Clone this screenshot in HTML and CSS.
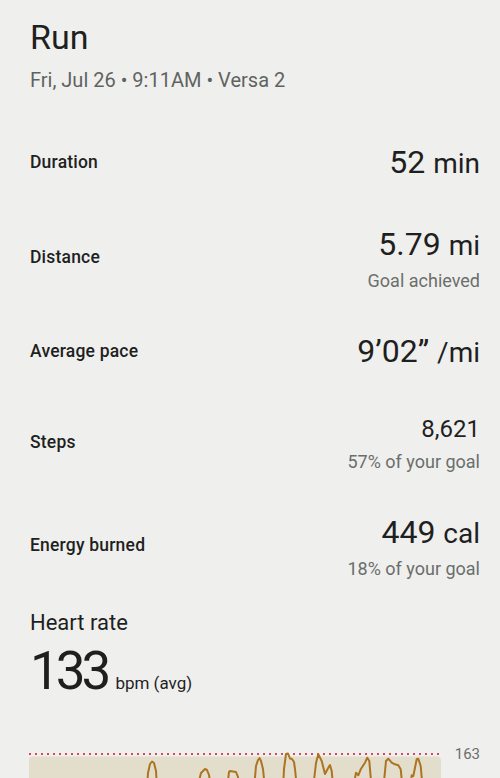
FILE: index.html
```html
<!DOCTYPE html>
<html lang="en">
<head>
  <meta charset="UTF-8" />
  <title>Run</title>
  <link rel="stylesheet" href="styles.css">
</head>
<body>
  <main class="page">
    <h1 class="title">Run</h1>
    <p class="meta">Fri, Jul 26 • 9:11AM • Versa 2</p>

    <section class="stats">
      <div class="row">
        <span class="label">Duration</span>
        <div class="value-block">
          <div class="value">52 <span class="unit">min</span></div>
        </div>
      </div>
      <div class="row">
        <span class="label">Distance</span>
        <div class="value-block">
          <div class="value">5.79 <span class="unit">mi</span></div>
          <div class="note">Goal achieved</div>
        </div>
      </div>
      <div class="row">
        <span class="label">Average pace</span>
        <div class="value-block">
          <div class="value">9’02” <span class="unit">/mi</span></div>
        </div>
      </div>
      <div class="row">
        <span class="label">Steps</span>
        <div class="value-block">
          <div class="value small">8,621</div>
          <div class="note">57% of your goal</div>
        </div>
      </div>
      <div class="row">
        <span class="label">Energy burned</span>
        <div class="value-block">
          <div class="value">449 <span class="unit">cal</span></div>
          <div class="note">18% of your goal</div>
        </div>
      </div>
    </section>

    <section class="heart">
      <h2 class="heart-title">Heart rate</h2>
      <div class="heart-avg">
        <span class="big">133</span><span class="bpm">bpm (avg)</span>
      </div>

      <div class="chart">
        <svg class="chart-svg" width="412" height="40" viewBox="0 0 412 40">
          <rect x="0" y="7.5" width="412" height="60" rx="4" fill="#e3ddcc" />
          <line x1="0" y1="5" x2="412" y2="5" stroke="#d8495e" stroke-width="2" stroke-dasharray="2 4" />
          <g fill="none" stroke="#ad7420" stroke-width="2" stroke-linejoin="round" stroke-linecap="round">
            <path d="M118 40 L119 24 L121 15 L123 12.5 L125 14 L127 22 L128 40" />
            <path d="M169 40 L170 32 L172 24 L174 22 L176 20 L178 21 L180 26 L181 32 L182 40" />
            <path d="M198 40 L200 23 L201 22 L207 23 L209 28 L211 40" />
            <path d="M225 40 L227 17 L229 11 L230.5 9 L232 12 L234 20 L236 40" />
            <path d="M254 40 L255 20 L257 5 L259 4.5 L261 9.5 L263 10 L265 13 L266 20 L268 40" />
            <path d="M284 40 L287 14 L289.3 5.3 L292.7 12 L296 25 L299.3 18.7 L301 16 L302.7 22 L304.3 40" />
            <path d="M324 40 L327 23.7 L329.3 26.3 L331.7 20.3 L336 13.7 L338.3 8.7 L340.3 12 L342.7 40" />
            <path d="M354.3 40 L357 12 L359.3 9.7 L362.7 13.7 L366 15.3 L369.3 16.3 L371.7 20.3 L373.7 40" />
            <path d="M381 40 L382.7 26.3 L384.3 27 L387.7 10.3 L389.3 9.7 L391.7 17 L393.7 40" />
          </g>
        </svg>
        <span class="chart-max">163</span>
      </div>
    </section>
  </main>
</body>
</html>
```

FILE: styles.css
```css
body {
  margin: 0;
  background: #eff0ee;
  font-family: Roboto, "Noto Sans", sans-serif;
  color: #1f1f1f;
}

.page {
  padding: 17px 20px 0 30px;
}

.title {
  margin: 0;
  font-size: 34px;
  font-weight: 400;
  line-height: 40px;
}

.meta {
  margin: 11px 0 0;
  font-size: 20px;
  line-height: 24px;
  color: #5f6360;
}

.stats {
  margin-top: 29px;
}

.row {
  display: flex;
  justify-content: space-between;
  align-items: center;
  padding: 21px 0;
}

.label {
  font-size: 17.5px;
  font-weight: 500;
  letter-spacing: 0.2px;
}

.value-block {
  text-align: right;
}

.value {
  font-size: 32px;
  line-height: 40px;
}

.value.small {
  font-size: 24px;
  line-height: 32px;
}

.unit {
  font-size: 28px;
  line-height: 1;
}

.note {
  margin: 7px 0 -2px;
  font-size: 18px;
  line-height: 20px;
  color: #6b6e6b;
}

.heart-title {
  margin: 11px 0 0;
  font-size: 22px;
  font-weight: 400;
  line-height: 28px;
}

.heart-avg {
  margin-top: 2px;
  line-height: 64px;
}

.big {
  font-size: 53px;
  letter-spacing: -4px;
}

.bpm {
  margin-left: 8px;
  font-size: 17px;
  line-height: 1;
}

.chart {
  display: flex;
  align-items: flex-start;
  margin-top: 33px;
}

.chart-svg {
  display: block;
  margin-left: -1px;
}

.chart-max {
  flex: 1;
  text-align: right;
  font-size: 15px;
  line-height: 18px;
  color: #6b6e6b;
  margin-top: -4px;
}
```
